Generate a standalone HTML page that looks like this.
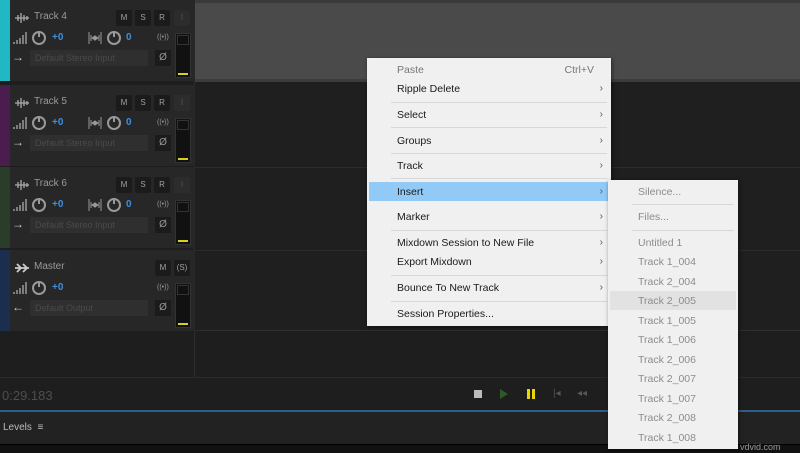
<!DOCTYPE html>
<html><head><meta charset="utf-8"><style>
*{margin:0;padding:0;box-sizing:border-box}
body{width:800px;height:453px;overflow:hidden;background:#1e1e1e;font-family:"Liberation Sans",sans-serif;position:relative}
.a{position:absolute}
.hdr{position:absolute;left:0;width:195px;height:81px;background:#272727}
.strip{position:absolute;left:0;top:0;width:10px;height:100%}
.nm{position:absolute;left:34px;top:11px;font-size:10px;color:#9a9a9a}
.btn{position:absolute;top:10px;width:16px;height:16px;background:#1b1b1b;border-radius:2px;color:#a0a0a0;font-size:8px;text-align:center;line-height:16px}
.blue{position:absolute;font-size:10px;color:#3d8fe0;font-weight:bold}
.inp{position:absolute;left:30px;top:50px;width:118px;height:16px;background:#2f2f2f;color:#4a4a4a;font-size:9px;line-height:16px;padding-left:5px}
.phi{position:absolute;left:155px;top:50px;width:16px;height:16px;background:#1b1b1b;color:#999;font-size:10px;text-align:center;line-height:16px}
.mtr{position:absolute;left:175px;top:33px;width:16px;height:45px;background:#111;border:1px solid #333}
.mtr:after{content:"";position:absolute;left:2px;right:2px;bottom:2px;height:2px;background:#d8d020}
.mtr:before{content:"";position:absolute;left:1px;right:1px;top:1px;height:8px;border:1px solid #333}
.knob{position:absolute;width:14px;height:14px;border:2px solid #999;border-radius:50%}
.knob:after{content:"";position:absolute;left:4px;top:-2px;width:2px;height:6px;background:#999}
.lane{position:absolute;left:195px;width:605px}
.menu{position:absolute;background:#f0f0f0;box-shadow:1px 1px 4px rgba(0,0,0,.5);font-family:"Liberation Sans",sans-serif;font-size:10.5px;color:#1a1a1a}
.it{position:absolute;left:30px;height:14px;line-height:14px}
.ar{position:absolute;right:8px;color:#555;font-size:10px;line-height:14px}
.sep{position:absolute;left:24px;right:4px;height:1px;background:#d8d8d8}
.sub .it{left:30px;color:#8c8c8c}
.bars{position:absolute;left:13px;top:32px}
.st{position:absolute;left:88px;top:31px}
.wv{position:absolute;left:14px;top:13px}
</style></head><body>
<div class="lane" style="top:0;height:82px;background:#4a4a4a;border-top:3px solid #3a3a3a;border-bottom:3px solid #3c3c3c"></div>
<div class="lane" style="top:85px;height:80px;background:#1f1f1f"></div>
<div class="lane" style="top:167px;height:80px;background:#1f1f1f;border-top:1px solid #2c2c2c"></div>
<div class="lane" style="top:250px;height:80px;background:#1f1f1f;border-top:1px solid #2c2c2c"></div>
<div class="a" style="left:0;top:330px;width:800px;height:1px;background:#2e2e2e"></div>
<div class="a" style="left:194px;top:0;width:1px;height:378px;background:#2e2e2e"></div>
<div class="a" style="left:0;top:377px;width:800px;height:1px;background:#2a2a2a"></div>

<div class="hdr" style="top:0"><div class="strip" style="background:#1fb8c4"></div>
<svg class="wv" width="16" height="10"><path d="M1 5H15M4 2V8M7 0V10M10 2V8M13 3V7" stroke="#aaa" stroke-width="1.3"/></svg><div class="nm">Track 4</div>
<div class="btn" style="left:116px">M</div><div class="btn" style="left:135px">S</div><div class="btn" style="left:154px">R</div><div class="btn" style="left:174px;background:#2c2c2c;color:#555">I</div>
<svg class="bars" width="14" height="12"><path d="M1 12V10M4 12V8M7 12V6M10 12V3M13 12V0" stroke="#999" stroke-width="1.5"/></svg><div class="knob" style="left:32px;top:31px"></div><div class="blue" style="left:52px;top:32px">+0</div>
<svg class="st" width="14" height="14"><path d="M1 1V13M13 1V13M3 4V10M11 4V10M4 7L7 5V9ZM10 7L7 5V9Z" stroke="#999" stroke-width="1" fill="#999"/></svg><div class="knob" style="left:107px;top:31px"></div><div class="blue" style="left:126px;top:32px">0</div>
<div class="a" style="left:157px;top:34px;color:#999;font-size:7px">((•))</div>
<div class="a" style="left:12px;top:50px;color:#ccc;font-size:12px">→</div><div class="inp">Default Stereo Input</div><div class="phi">Ø</div><div class="mtr"></div></div>

<div class="hdr" style="top:85px"><div class="strip" style="background:#4a1d4e"></div>
<svg class="wv" width="16" height="10"><path d="M1 5H15M4 2V8M7 0V10M10 2V8M13 3V7" stroke="#aaa" stroke-width="1.3"/></svg><div class="nm">Track 5</div>
<div class="btn" style="left:116px">M</div><div class="btn" style="left:135px">S</div><div class="btn" style="left:154px">R</div><div class="btn" style="left:174px;background:#2c2c2c;color:#555">I</div>
<svg class="bars" width="14" height="12"><path d="M1 12V10M4 12V8M7 12V6M10 12V3M13 12V0" stroke="#999" stroke-width="1.5"/></svg><div class="knob" style="left:32px;top:31px"></div><div class="blue" style="left:52px;top:32px">+0</div>
<svg class="st" width="14" height="14"><path d="M1 1V13M13 1V13M3 4V10M11 4V10M4 7L7 5V9ZM10 7L7 5V9Z" stroke="#999" stroke-width="1" fill="#999"/></svg><div class="knob" style="left:107px;top:31px"></div><div class="blue" style="left:126px;top:32px">0</div>
<div class="a" style="left:157px;top:34px;color:#999;font-size:7px">((•))</div>
<div class="a" style="left:12px;top:50px;color:#ccc;font-size:12px">→</div><div class="inp">Default Stereo Input</div><div class="phi">Ø</div><div class="mtr"></div></div>

<div class="hdr" style="top:167px"><div class="strip" style="background:#2a3d2a"></div>
<svg class="wv" width="16" height="10"><path d="M1 5H15M4 2V8M7 0V10M10 2V8M13 3V7" stroke="#aaa" stroke-width="1.3"/></svg><div class="nm">Track 6</div>
<div class="btn" style="left:116px">M</div><div class="btn" style="left:135px">S</div><div class="btn" style="left:154px">R</div><div class="btn" style="left:174px;background:#2c2c2c;color:#555">I</div>
<svg class="bars" width="14" height="12"><path d="M1 12V10M4 12V8M7 12V6M10 12V3M13 12V0" stroke="#999" stroke-width="1.5"/></svg><div class="knob" style="left:32px;top:31px"></div><div class="blue" style="left:52px;top:32px">+0</div>
<svg class="st" width="14" height="14"><path d="M1 1V13M13 1V13M3 4V10M11 4V10M4 7L7 5V9ZM10 7L7 5V9Z" stroke="#999" stroke-width="1" fill="#999"/></svg><div class="knob" style="left:107px;top:31px"></div><div class="blue" style="left:126px;top:32px">0</div>
<div class="a" style="left:157px;top:34px;color:#999;font-size:7px">((•))</div>
<div class="a" style="left:12px;top:50px;color:#ccc;font-size:12px">→</div><div class="inp">Default Stereo Input</div><div class="phi">Ø</div><div class="mtr"></div></div>

<div class="hdr" style="top:250px"><div class="strip" style="background:#1c2e4e"></div>
<svg class="wv" width="16" height="12" style="top:12px"><path d="M1 6H15M9 2L13 6L9 10M3 2L7 6L3 10" stroke="#ccc" stroke-width="1.8" fill="none"/></svg><div class="nm">Master</div>
<div class="btn" style="left:155px">M</div><div class="btn" style="left:174px">(S)</div>
<svg class="bars" width="14" height="12"><path d="M1 12V10M4 12V8M7 12V6M10 12V3M13 12V0" stroke="#999" stroke-width="1.5"/></svg><div class="knob" style="left:32px;top:31px"></div><div class="blue" style="left:52px;top:32px">+0</div>
<div class="a" style="left:157px;top:34px;color:#999;font-size:7px">((•))</div>
<div class="a" style="left:12px;top:50px;color:#ccc;font-size:12px">←</div><div class="inp">Default Output</div><div class="phi">Ø</div><div class="mtr"></div></div>

<div class="a" style="left:2px;top:388px;color:#4e4e4e;font-size:13px">0:29.183</div>
<div class="a" style="left:474px;top:390px;width:8px;height:8px;background:#bbb"></div>
<div class="a" style="left:500px;top:389px;width:0;height:0;border-left:8px solid #2d5a2d;border-top:5px solid transparent;border-bottom:5px solid transparent"></div>
<div class="a" style="left:527px;top:389px;width:3px;height:10px;background:#e8d800"></div>
<div class="a" style="left:532px;top:389px;width:3px;height:10px;background:#e8d800"></div>
<div class="a" style="left:553px;top:388px;color:#555;font-size:10px">|◂</div>
<div class="a" style="left:577px;top:388px;color:#555;font-size:10px">◂◂</div>
<div class="a" style="left:0;top:410px;width:800px;height:2px;background:#2e5f8a"></div>
<div class="a" style="left:0;top:412px;width:800px;height:32px;background:#222"></div>
<div class="a" style="left:3px;top:422px;color:#bbb;font-size:10px">Levels&nbsp;&nbsp;≡</div>
<div class="a" style="left:0;top:444px;width:800px;height:9px;background:#111;border-top:1px solid #000"></div>
<div class="a" style="left:740px;top:442px;color:#999;font-size:9px">vdvid.com</div>

<div class="menu" style="left:367px;top:58px;width:244px;height:268px">
<div class="it" style="top:5px;color:#777">Paste</div><div class="a" style="right:17px;top:5px;color:#777;line-height:14px">Ctrl+V</div>
<div class="it" style="top:24px">Ripple Delete</div><div class="ar" style="top:24px">›</div>
<div class="sep" style="top:44px"></div>
<div class="it" style="top:50px">Select</div><div class="ar" style="top:50px">›</div>
<div class="sep" style="top:69px"></div>
<div class="it" style="top:76px">Groups</div><div class="ar" style="top:76px">›</div>
<div class="sep" style="top:95px"></div>
<div class="it" style="top:101px">Track</div><div class="ar" style="top:101px">›</div>
<div class="sep" style="top:120px"></div>
<div class="a" style="left:2px;top:124px;width:242px;height:19px;background:#91c9f7"></div>
<div class="it" style="top:127px">Insert</div><div class="ar" style="top:127px">›</div>
<div class="it" style="top:152px">Marker</div><div class="ar" style="top:152px">›</div>
<div class="sep" style="top:172px"></div>
<div class="it" style="top:178px">Mixdown Session to New File</div><div class="ar" style="top:178px">›</div>
<div class="it" style="top:197px">Export Mixdown</div><div class="ar" style="top:197px">›</div>
<div class="sep" style="top:217px"></div>
<div class="it" style="top:223px">Bounce To New Track</div><div class="ar" style="top:223px">›</div>
<div class="sep" style="top:243px"></div>
<div class="it" style="top:249px">Session Properties...</div>
</div>

<div class="menu sub" style="left:608px;top:180px;width:130px;height:269px">
<div class="it" style="top:5px">Silence...</div>
<div class="sep" style="top:24px"></div>
<div class="it" style="top:30px">Files...</div>
<div class="sep" style="top:50px"></div>
<div class="it" style="top:56px">Untitled 1</div>
<div class="it" style="top:75px">Track 1_004</div>
<div class="it" style="top:95px">Track 2_004</div>
<div class="a" style="left:2px;top:111px;width:126px;height:19px;background:#e2e2e2"></div>
<div class="it" style="top:114px">Track 2_005</div>
<div class="it" style="top:134px">Track 1_005</div>
<div class="it" style="top:153px">Track 1_006</div>
<div class="it" style="top:173px">Track 2_006</div>
<div class="it" style="top:192px">Track 2_007</div>
<div class="it" style="top:212px">Track 1_007</div>
<div class="it" style="top:231px">Track 2_008</div>
<div class="it" style="top:251px">Track 1_008</div>
</div>
</body></html>
